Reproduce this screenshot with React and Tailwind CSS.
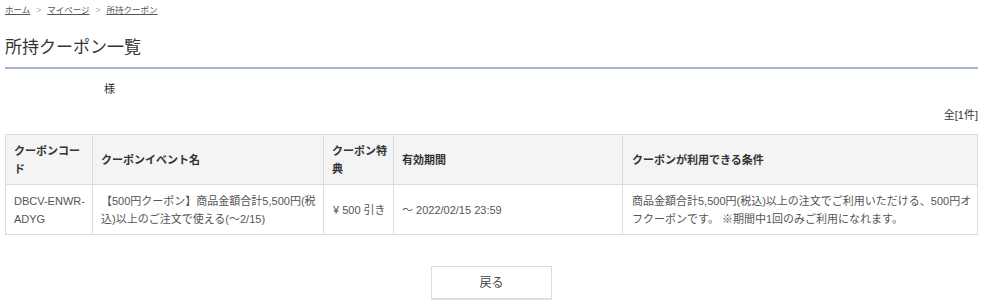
export default function App() {
  const font = { fontFamily: '"Liberation Sans", "Noto Sans CJK JP", sans-serif' };
  return (
    <div className="min-h-[307px] bg-white pl-[5px] pr-[7px] text-[#333]" style={font}>
      <nav className="flex items-center gap-[6px] pt-[3px] text-[8.5px] leading-[14px] text-[#555]">
        <a href="#" className="underline">ホーム</a>
        <span className="text-[#aaa]">&gt;</span>
        <a href="#" className="underline">マイページ</a>
        <span className="text-[#aaa]">&gt;</span>
        <a href="#" className="underline">所持クーポン</a>
      </nav>
      <h1 className="mt-[20px] text-[17px] leading-[22px] font-normal text-[#333]">所持クーポン一覧</h1>
      <div className="mt-[8px] h-[2px] bg-[#a7b4d1]" />
      <p className="mt-[13px] pl-[99px] text-[11px] leading-[14px]">様</p>
      <p className="mt-[12px] text-right text-[11px] leading-[14px]">全[1件]</p>
      <table className="mt-[12px] w-full table-fixed border-collapse text-[11px] leading-[18px]">
        <colgroup>
          <col className="w-[87px]" />
          <col className="w-[231px]" />
          <col className="w-[70px]" />
          <col className="w-[229px]" />
          <col />
        </colgroup>
        <thead>
          <tr className="h-[50px] bg-[#f4f4f4] text-left font-bold text-[#333]">
            <th className="border border-[#dcdcdc] pl-[8px] pr-[5px] align-middle">クーポンコード</th>
            <th className="border border-[#dcdcdc] pl-[8px] pr-[5px] align-middle">クーポンイベント名</th>
            <th className="border border-[#dcdcdc] pl-[8px] pr-[5px] align-middle">クーポン特典</th>
            <th className="border border-[#dcdcdc] pl-[8px] pr-[5px] align-middle">有効期間</th>
            <th className="border border-[#dcdcdc] pl-[9px] pr-[5px] align-middle">クーポンが利用できる条件</th>
          </tr>
        </thead>
        <tbody>
          <tr className="h-[50px] text-[#555]">
            <td className="border border-[#dcdcdc] pl-[8px] pr-[5px] align-middle">DBCV-ENWR-ADYG</td>
            <td className="border border-[#dcdcdc] pl-[8px] pr-[5px] align-middle">【500円クーポン】商品金額合計5,500円(税込)以上のご注文で使える(～2/15)</td>
            <td className="border border-[#dcdcdc] pl-[9px] pr-[3px] align-middle whitespace-nowrap">¥ 500 引き</td>
            <td className="border border-[#dcdcdc] pl-[8px] pr-[5px] align-middle">～ 2022/02/15 23:59</td>
            <td className="border border-[#dcdcdc] pl-[9px] pr-[5px] align-middle">商品金額合計5,500円(税込)以上の注文でご利用いただける、500円オフクーポンです。 ※期間中1回のみご利用になれます。</td>
          </tr>
        </tbody>
      </table>
      <div className="mt-[31px] flex justify-center">
        <button className="h-[33px] w-[121px] border border-[#dcdcdc] bg-white text-[12px] text-[#444] shadow-[0_1px_0_#e5e5e5]">戻る</button>
      </div>
    </div>
  );
}
